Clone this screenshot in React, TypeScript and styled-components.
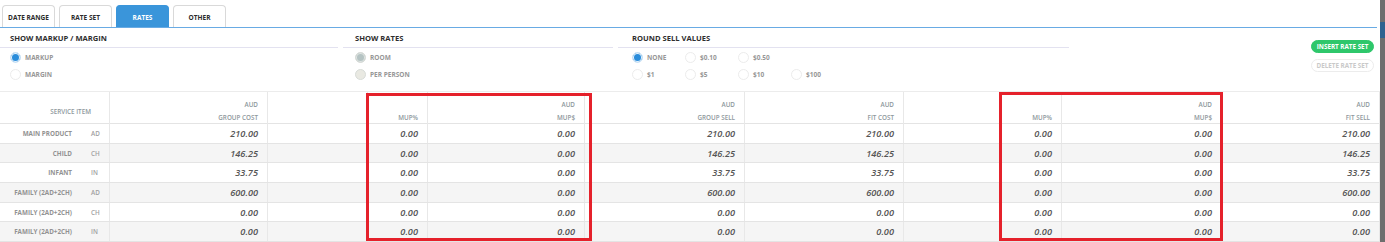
import React from 'react';
import styled, { createGlobalStyle } from 'styled-components';

const GlobalStyle = createGlobalStyle`
  html, body {
    margin: 0;
    padding: 0;
    background: #fff;
  }
  body {
    font-family: "Open Sans", "Liberation Sans", sans-serif;
  }
`;

const COLS = '110px 158px 100px 60px 157px 160px 159px 96px 62px 160px 1fr';

type Rate = {
  name: string;
  code: string;
  groupCost: string;
  groupSell: string;
  fitCost: string;
  fitSell: string;
};

const RATES: Rate[] = [
  { name: 'MAIN PRODUCT', code: 'AD', groupCost: '210.00', groupSell: '210.00', fitCost: '210.00', fitSell: '210.00' },
  { name: 'CHILD', code: 'CH', groupCost: '146.25', groupSell: '146.25', fitCost: '146.25', fitSell: '146.25' },
  { name: 'INFANT', code: 'IN', groupCost: '33.75', groupSell: '33.75', fitCost: '33.75', fitSell: '33.75' },
  { name: 'FAMILY (2AD+2CH)', code: 'AD', groupCost: '600.00', groupSell: '600.00', fitCost: '600.00', fitSell: '600.00' },
  { name: 'FAMILY (2AD+2CH)', code: 'CH', groupCost: '0.00', groupSell: '0.00', fitCost: '0.00', fitSell: '0.00' },
  { name: 'FAMILY (2AD+2CH)', code: 'IN', groupCost: '0.00', groupSell: '0.00', fitCost: '0.00', fitSell: '0.00' },
];

const Page = styled.div`
  display: flex;
  width: 1385px;
  height: 242px;
  overflow: hidden;
`;

const Main = styled.div`
  width: 1380px;
  display: flex;
  flex-direction: column;
`;

const EdgeStrip = styled.div`
  width: 5px;
  background: #6e6e6e;
  display: flex;
  flex-direction: column;
  padding-top: 22px;
`;

const EdgeMark = styled.div`
  height: 16px;
  background: #2f6390;
`;

const TabBar = styled.div`
  display: flex;
  gap: 4px;
  height: 22px;
  padding: 5px 0 0 2px;
  border-bottom: 1px solid #69abe4;
  margin-right: 3px;
`;

const Tab = styled.div<{ $active?: boolean }>`
  width: 53px;
  height: 22px;
  box-sizing: border-box;
  border: 1px solid ${({ $active }) => ($active ? '#3a95da' : '#d9d9d9')};
  border-bottom: none;
  border-radius: 4px 4px 0 0;
  background: ${({ $active }) => ($active ? '#3a95da' : '#fff')};
  color: ${({ $active }) => ($active ? '#fff' : '#2b2b2b')};
  font-size: 6.5px;
  font-weight: 700;
  display: flex;
  align-items: center;
  justify-content: center;
  padding-top: 1px;
`;

const Options = styled.div`
  display: flex;
  height: 64px;
`;

const Group = styled.div<{ $width: number; $indent: number }>`
  width: ${({ $width }) => $width}px;
  margin-right: 5px;
  display: flex;
  flex-direction: column;
  --indent: ${({ $indent }) => $indent}px;
`;

const GroupTitle = styled.div`
  height: 15px;
  padding: 4px 0 0 var(--indent);
  box-sizing: content-box;
  line-height: 12px;
  font-size: 7.6px;
  font-weight: 700;
  color: #2e2e2e;
  border-bottom: 1px solid #e3e2f0;
`;

const RadioGrid = styled.div<{ $cols: number }>`
  display: grid;
  grid-template-columns: repeat(${({ $cols }) => $cols}, 53px);
  grid-auto-rows: 17px;
  padding: 1px 0 0 var(--indent);
`;

const RadioItem = styled.label`
  display: flex;
  align-items: center;
  gap: 4px;
  font-size: 6.5px;
  font-weight: 700;
  color: #979797;
  white-space: nowrap;
`;

type Dot = 'off' | 'on' | 'disabledOn' | 'disabledOff';

const RadioCircle = styled.span<{ $state: Dot }>`
  width: 11px;
  height: 11px;
  box-sizing: border-box;
  border-radius: 50%;
  flex: none;
  border: 1px solid
    ${({ $state }) => ($state === 'off' ? '#ececec' : $state === 'on' ? '#d7e9f8' : '#d8dcd8')};
  background: ${({ $state }) =>
    $state === 'on'
      ? '#2a8ddb'
      : $state === 'disabledOn'
      ? '#b5c3c3'
      : $state === 'disabledOff'
      ? '#e9e9e2'
      : '#fff'};
  box-shadow: ${({ $state }) =>
    $state === 'on' ? 'inset 0 0 0 1px #eaf4fc' : $state === 'disabledOn' ? 'inset 0 0 0 1px #dfe4e2' : 'none'};
`;

const Spacer = styled.div`
  flex: 1;
`;

const ButtonColumn = styled.div`
  display: flex;
  flex-direction: column;
  gap: 6px;
  padding: 12px 6px 0 0;
`;

const PillButton = styled.button<{ $disabled?: boolean }>`
  width: 63px;
  height: 13px;
  padding: 0;
  border-radius: 7px;
  border: 1px solid ${({ $disabled }) => ($disabled ? '#ececec' : '#2ec76b')};
  background: ${({ $disabled }) => ($disabled ? '#fff' : '#2ec76b')};
  color: ${({ $disabled }) => ($disabled ? '#c9c9c9' : '#fff')};
  font-family: inherit;
  font-size: 6.3px;
  font-weight: 700;
  line-height: 11px;
  cursor: pointer;
`;

const TableWrap = styled.div`
  position: relative;
  flex: 1;
  border-top: 1px solid #ececec;
`;

const Row = styled.div<{ $stripe?: boolean; $head?: boolean }>`
  display: grid;
  grid-template-columns: ${COLS};
  height: ${({ $head }) => ($head ? '31px' : '18.67px')};
  background: ${({ $stripe }) => ($stripe ? '#f5f5f5' : '#fff')};
  border-bottom: 1px solid #e4e4e4;
`;

const HeadCell = styled.div`
  display: flex;
  flex-direction: column;
  justify-content: flex-end;
  align-items: flex-end;
  padding: 0 9px 0 0;
  margin-bottom: -1px;
  border-right: 1px solid #e8e8e8;
  font-size: 6.3px;
  font-weight: 600;
  line-height: 13px;
  color: #8e979c;
`;

const ServiceHead = styled(HeadCell)`
  justify-content: center;
  padding: 6px 18px 0 0;
`;

const Cell = styled.div`
  display: flex;
  align-items: center;
  justify-content: flex-end;
  padding-right: 9px;
  border-right: 1px solid #e8e8e8;
  font-size: 9.2px;
  font-style: italic;
  font-weight: 600;
  color: #555;
`;

const ItemCell = styled.div`
  display: flex;
  align-items: center;
  border-right: 1px solid #e8e8e8;
  font-size: 6.3px;
  font-weight: 700;
  color: #929292;
`;

const ItemName = styled.span`
  width: 72px;
  text-align: right;
  white-space: nowrap;
`;

const ItemCode = styled.span`
  margin-left: 19px;
  font-weight: 600;
  color: #a0a0a0;
`;

const Highlight = styled.div<{ $left: number; $top: number; $width: number; $height: number }>`
  position: absolute;
  left: ${({ $left }) => $left}px;
  top: ${({ $top }) => $top}px;
  width: ${({ $width }) => $width}px;
  height: ${({ $height }) => $height}px;
  box-sizing: border-box;
  border: 3px solid #e5212b;
  pointer-events: none;
`;

const Head = ({ top, bottom }: { top?: string; bottom?: string }) => (
  <HeadCell>
    {top && <span>{top}</span>}
    {bottom && <span>{bottom}</span>}
  </HeadCell>
);

const App = () => (
  <Page>
    <GlobalStyle />
    <Main>
      <TabBar>
        <Tab>DATE RANGE</Tab>
        <Tab>RATE SET</Tab>
        <Tab $active>RATES</Tab>
        <Tab>OTHER</Tab>
      </TabBar>

      <Options>
        <Group $width={338} $indent={10}>
          <GroupTitle>SHOW MARKUP / MARGIN</GroupTitle>
          <RadioGrid $cols={1}>
            <RadioItem>
              <RadioCircle $state="on" />
              MARKUP
            </RadioItem>
            <RadioItem>
              <RadioCircle $state="off" />
              MARGIN
            </RadioItem>
          </RadioGrid>
        </Group>
        <Group $width={270} $indent={12}>
          <GroupTitle>SHOW RATES</GroupTitle>
          <RadioGrid $cols={1}>
            <RadioItem>
              <RadioCircle $state="disabledOn" />
              ROOM
            </RadioItem>
            <RadioItem>
              <RadioCircle $state="disabledOff" />
              PER PERSON
            </RadioItem>
          </RadioGrid>
        </Group>
        <Group $width={451} $indent={14}>
          <GroupTitle>ROUND SELL VALUES</GroupTitle>
          <RadioGrid $cols={4}>
            <RadioItem>
              <RadioCircle $state="on" />
              NONE
            </RadioItem>
            <RadioItem>
              <RadioCircle $state="off" />
              $0.10
            </RadioItem>
            <RadioItem>
              <RadioCircle $state="off" />
              $0.50
            </RadioItem>
            <span />
            <RadioItem>
              <RadioCircle $state="off" />
              $1
            </RadioItem>
            <RadioItem>
              <RadioCircle $state="off" />
              $5
            </RadioItem>
            <RadioItem>
              <RadioCircle $state="off" />
              $10
            </RadioItem>
            <RadioItem>
              <RadioCircle $state="off" />
              $100
            </RadioItem>
          </RadioGrid>
        </Group>
        <Spacer />
        <ButtonColumn>
          <PillButton>INSERT RATE SET</PillButton>
          <PillButton $disabled>DELETE RATE SET</PillButton>
        </ButtonColumn>
      </Options>

      <TableWrap>
        <Row $head>
          <ServiceHead>SERVICE ITEM</ServiceHead>
          <Head top="AUD" bottom="GROUP COST" />
          <Head />
          <Head bottom="MUP%" />
          <Head top="AUD" bottom="MUP$" />
          <Head top="AUD" bottom="GROUP SELL" />
          <Head top="AUD" bottom="FIT COST" />
          <Head />
          <Head bottom="MUP%" />
          <Head top="AUD" bottom="MUP$" />
          <Head top="AUD" bottom="FIT SELL" />
        </Row>
        {RATES.map((r, i) => (
          <Row key={i} $stripe={i % 2 === 1}>
            <ItemCell>
              <ItemName>{r.name}</ItemName>
              <ItemCode>{r.code}</ItemCode>
            </ItemCell>
            <Cell>{r.groupCost}</Cell>
            <Cell />
            <Cell>0.00</Cell>
            <Cell>0.00</Cell>
            <Cell>{r.groupSell}</Cell>
            <Cell>{r.fitCost}</Cell>
            <Cell />
            <Cell>0.00</Cell>
            <Cell>0.00</Cell>
            <Cell>{r.fitSell}</Cell>
          </Row>
        ))}
        <Highlight $left={366} $top={1} $width={226} $height={148} />
        <Highlight $left={999} $top={0} $width={224} $height={149} />
      </TableWrap>
    </Main>
    <EdgeStrip>
      <EdgeMark />
    </EdgeStrip>
  </Page>
);

export default App;
